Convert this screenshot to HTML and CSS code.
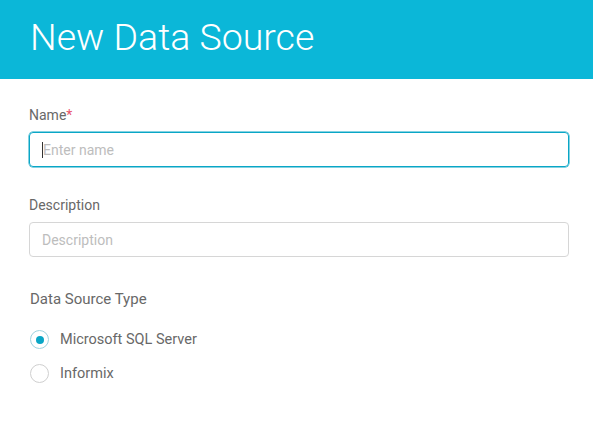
FILE: index.html
```html
<!DOCTYPE html>
<html>
<head>
<meta charset="utf-8">
<link rel="stylesheet" href="styles.css">
</head>
<body>
<header class="header"><h1 class="title">New Data Source</h1></header>
<main class="form">
  <div class="field">
    <label class="label">Name<span class="req">*</span></label>
    <div class="input focused"><span class="caret"></span><span class="ph">Enter name</span></div>
  </div>
  <div class="field">
    <label class="label">Description</label>
    <div class="input"><span class="ph">Description</span></div>
  </div>
  <div class="field type">
    <label class="label big">Data Source Type</label>
    <div class="radios">
      <div class="radio"><span class="dot checked"></span><span class="rlabel">Microsoft SQL Server</span></div>
      <div class="radio"><span class="dot"></span><span class="rlabel">Informix</span></div>
    </div>
  </div>
</main>
</body>
</html>
```
FILE: styles.css
```css
html, body { margin: 0; padding: 0; background: #fff; }
body { font-family: Roboto, "Liberation Sans", sans-serif; width: 593px; height: 421px; overflow: hidden; }
.header { background: #0bb7d8; height: 79px; display: flex; align-items: center; padding-left: 30px; box-sizing: border-box; }
.title { margin: 0; color: #fff; font-weight: 300; font-size: 37.5px; line-height: 1; padding-bottom: 4px; }
.form { padding: 27px 24px 0 29px; display: flex; flex-direction: column; gap: 29px; }
.field { display: flex; flex-direction: column; }
.field.type { margin-top: 4px; }
.label { font-size: 14px; color: #686868; line-height: 18px; margin-bottom: 8px; }
.label.big { font-size: 15px; margin-left: 1px; }
.req { color: #e8536b; }
.input { height: 35px; box-sizing: border-box; border: 1px solid #d6d6d6; border-radius: 4px; display: flex; align-items: center; padding-left: 12px; font-size: 14px; }
.input.focused { border-color: #0aa6c6; box-shadow: 0 0 0 0.5px #0aa6c6; }
.caret { width: 1px; height: 16px; background: #333; }
.ph { color: #bdbdbd; }
.radios { display: flex; flex-direction: column; gap: 15px; margin-top: 14px; }
.radio { display: flex; align-items: center; gap: 11px; margin-left: 1px; }
.dot { width: 19px; height: 19px; box-sizing: border-box; border: 1px solid #cfcfcf; border-radius: 50%; display: flex; align-items: center; justify-content: center; }
.dot.checked { border-color: #9fd3df; }
.dot.checked::after { content: ""; width: 8px; height: 8px; border-radius: 50%; background: #0aa6c6; }
.rlabel { font-size: 14.5px; color: #686868; }
```
